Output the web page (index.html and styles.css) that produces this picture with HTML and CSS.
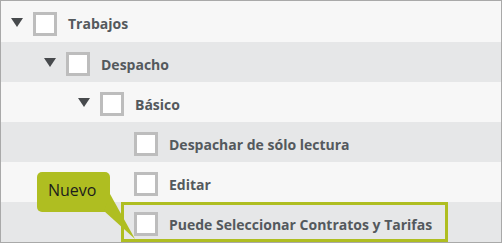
FILE: index.html
```html
<!DOCTYPE html>
<html lang="es">
<head>
  <meta charset="UTF-8" />
  <title>Permisos</title>
  <link rel="stylesheet" href="styles.css">
</head>
<body>

  <div class="tree">
    <div class="row light first level-0">
      <span class="toggle"></span>
      <span class="check"></span>
      <span class="label">Trabajos</span>
    </div>
    <div class="row gray level-1">
      <span class="toggle"></span>
      <span class="check"></span>
      <span class="label">Despacho</span>
    </div>
    <div class="row light level-2">
      <span class="toggle"></span>
      <span class="check"></span>
      <span class="label">Básico</span>
    </div>
    <div class="row gray level-3">
      <span class="check"></span>
      <span class="label">Despachar de sólo lectura</span>
    </div>
    <div class="row light level-3">
      <span class="check"></span>
      <span class="label">Editar</span>
    </div>
    <div class="row gray level-3 new-row">
      <div class="highlight">
        <span class="check"></span>
        <span class="label">Puede Seleccionar Contratos y Tarifas</span>
      </div>
      <div class="tip">
        Nuevo
        <svg class="tip-tail" width="36" height="50" viewBox="0 0 36 50">
          <polygon points="0,19 6,2 31,47" fill="#afbe21" />
        </svg>
      </div>
    </div>
  </div>

</body>
</html>
```

FILE: styles.css
```css
* {
  box-sizing: border-box;
}

body {
  margin: 0;
  font-family: 'Open Sans', sans-serif;
}

.tree {
  width: 502px;
  height: 243px;
  border: 1px solid #a9a9a9;
  overflow: hidden;
}

.row {
  display: flex;
  align-items: center;
  height: 40px;
  position: relative;
}

.row.first {
  height: 41px;
}

.light {
  background: #f7f7f7;
}

.gray {
  background: #e6e7e8;
}

.level-0 { padding-left: 10px; }
.level-1 { padding-left: 43px; }
.level-2 { padding-left: 77px; }
.level-3 { padding-left: 133px; }

.toggle {
  width: 0;
  height: 0;
  border-left: 6px solid transparent;
  border-right: 6px solid transparent;
  border-top: 9px solid #474a4d;
  margin-right: 10px;
  margin-top: 1px;
}

.check {
  width: 24px;
  height: 24px;
  border: 3px solid #bdbdbd;
  background: #fff;
  margin-right: 11px;
  margin-top: 4px;
  flex-shrink: 0;
}

.label {
  font-size: 14px;
  font-weight: bold;
  color: #54595d;
  margin-top: 4px;
}

.new-row {
  padding-left: 120px;
}

.highlight {
  display: flex;
  align-items: center;
  height: 40px;
  padding-left: 10px;
  padding-right: 13px;
  border: 3px solid #afbe21;
}

.tip {
  position: absolute;
  left: 36px;
  top: -30px;
  width: 73px;
  height: 40px;
  padding: 7px 0 0 11px;
  background: #afbe21;
  border-radius: 5px;
  font-size: 16px;
  color: #1c1c1c;
}

.tip-tail {
  position: absolute;
  left: 67px;
  top: 20px;
}
```
